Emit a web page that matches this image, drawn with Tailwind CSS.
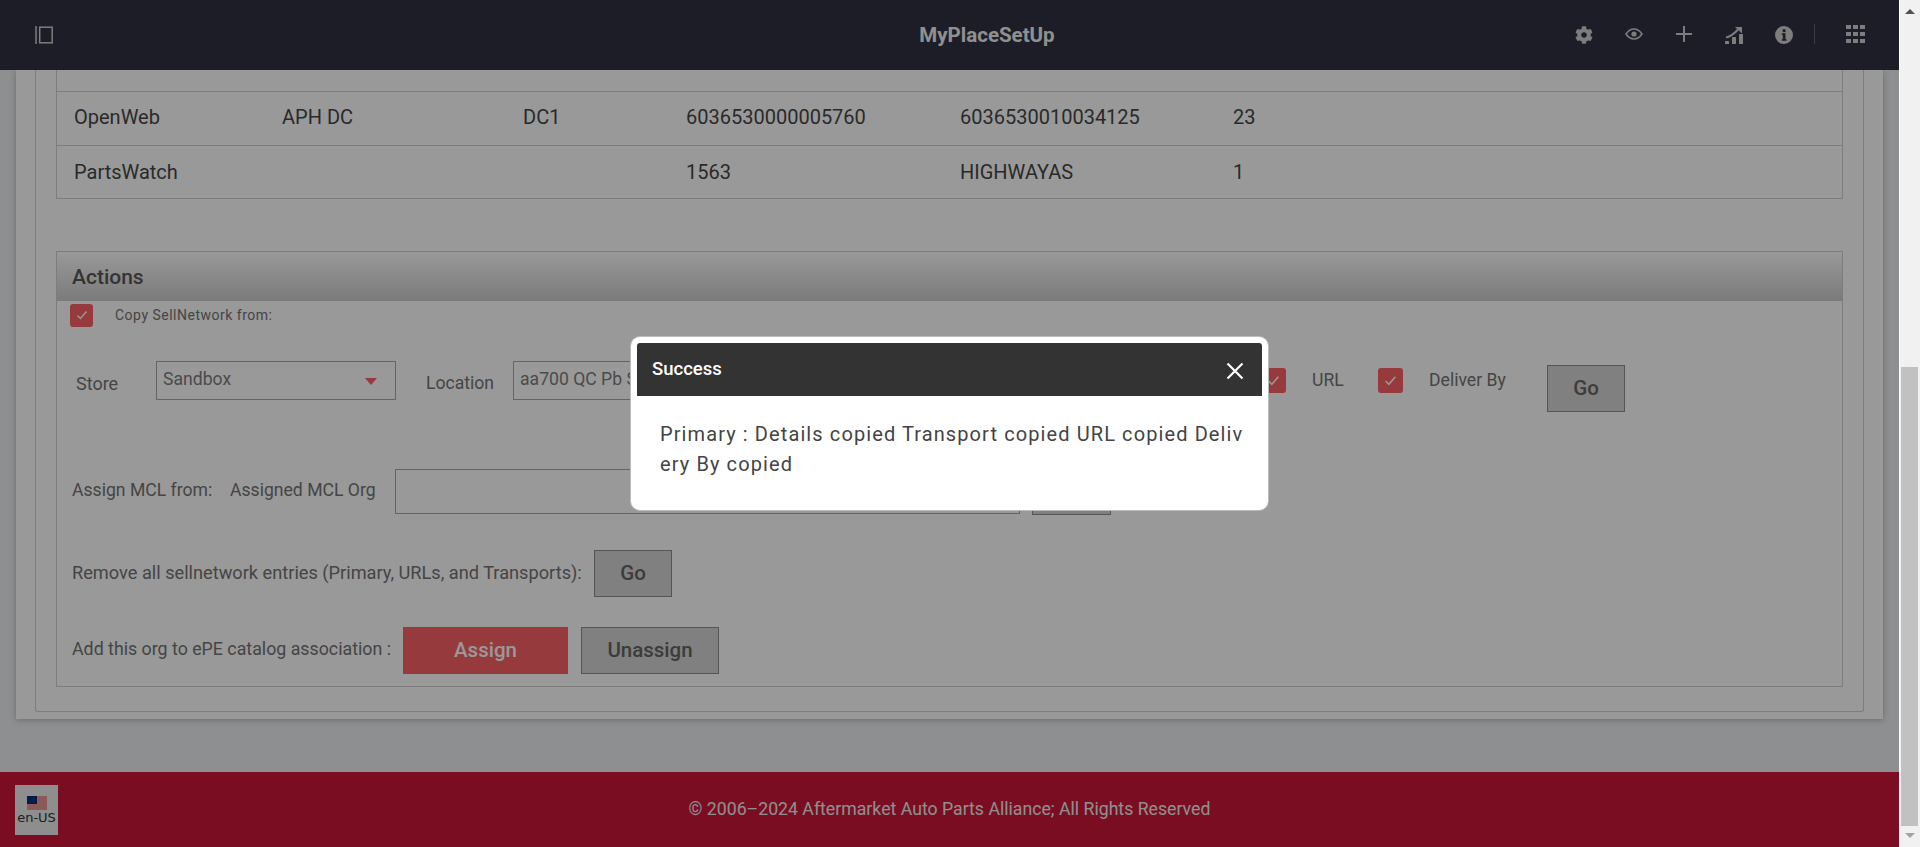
<!DOCTYPE html>
<html lang="en">
<head>
    <meta charset="UTF-8">
    <title>MyPlaceSetUp</title>
    <script src="https://cdn.jsdelivr.net/npm/@tailwindcss/browser@4"></script>
</head>
<body class="h-screen overflow-hidden flex bg-white font-['Roboto',sans-serif]">
    <!-- Page column, everything here sits under the modal backdrop -->
    <div class="relative w-[1899px] h-full flex flex-col">
        <!-- Top bar -->
        <header class="h-[70px] shrink-0 flex items-center bg-[#2f3140] relative z-10">
            <div class="w-[404px] pl-[35px]">
                <svg width="18" height="18" viewBox="0 0 18 18" fill="none" stroke="#d0d0d0" stroke-width="1.5"><path d="M1 0v18"/><rect x="4.7" y="1.2" width="12.5" height="15.6"/></svg>
            </div>
            <div class="flex-1 text-center text-[20.5px] font-bold text-[#f0f0f0]">MyPlaceSetUp</div>
            <div class="w-[329px] flex items-center">
                <div class="w-[50px] flex justify-center ml-[-11px]">
                    <svg width="18" height="18" viewBox="0 0 512 512" fill="#d0d0d0"><path d="M487.4 315.7l-42.6-24.6c4.3-23.2 4.3-47 0-70.2l42.6-24.6c4.9-2.8 7.1-8.6 5.5-14-11.1-35.6-30-67.8-54.7-94.6-3.8-4.1-10-5.1-14.8-2.3L380.8 110c-17.9-15.4-38.5-27.3-60.8-35.1V25.8c0-5.6-3.9-10.5-9.4-11.7-36.7-8.2-74.3-7.8-109.2 0-5.5 1.2-9.4 6.1-9.4 11.7V75c-22.2 7.9-42.8 19.8-60.8 35.1L88.7 85.5c-4.9-2.8-11-1.9-14.8 2.3-24.7 26.7-43.6 58.9-54.7 94.6-1.7 5.4.6 11.2 5.5 14L67.3 221c-4.3 23.2-4.3 47 0 70.2l-42.6 24.6c-4.9 2.8-7.1 8.6-5.5 14 11.1 35.6 30 67.8 54.7 94.6 3.8 4.1 10 5.1 14.8 2.3l42.6-24.6c17.9 15.4 38.5 27.3 60.8 35.1v49.2c0 5.6 3.9 10.5 9.4 11.7 36.7 8.2 74.3 7.8 109.2 0 5.5-1.2 9.4-6.1 9.4-11.7v-49.2c22.2-7.9 42.8-19.8 60.8-35.1l42.6 24.6c4.9 2.8 11 1.9 14.8-2.3 24.7-26.7 43.6-58.9 54.7-94.6 1.5-5.5-.7-11.3-5.6-14.1zM256 336c-44.1 0-80-35.9-80-80s35.9-80 80-80 80 35.9 80 80-35.9 80-80 80z"/></svg>
                </div>
                <div class="w-[50px] flex justify-center mb-[2px]">
                    <svg width="18" height="12" viewBox="0 0 18 12" fill="none" stroke="#d0d0d0" stroke-width="1.6"><path d="M1 6C3.5 2.4 6 1 9 1s5.5 1.4 8 5c-2.5 3.6-5 5-8 5S3.5 9.6 1 6z"/><circle cx="9" cy="6" r="2.6" fill="#d0d0d0" stroke="none"/></svg>
                </div>
                <div class="w-[50px] flex justify-center mb-[2px]">
                    <svg width="18" height="18" viewBox="0 0 18 18" stroke="#d0d0d0" stroke-width="2"><path d="M9 1v16M1 9h16"/></svg>
                </div>
                <div class="w-[50px] flex justify-center">
                    <svg width="18" height="18" viewBox="0 0 18 18" fill="#d0d0d0"><rect x="0" y="15" width="4" height="3" rx="0.5"/><rect x="7" y="11" width="4" height="7" rx="0.5"/><rect x="14" y="8" width="4" height="10" rx="0.5"/><path d="M1 11.5C5 10.5 9 8 13 3.5" fill="none" stroke="#d0d0d0" stroke-width="2"/><path d="M10 1h7v6.5z"/></svg>
                </div>
                <div class="w-[50px] flex justify-center">
                    <svg width="18" height="18" viewBox="0 0 18 18"><circle cx="9" cy="9" r="9" fill="#d0d0d0"/><rect x="7.7" y="3.3" width="2.8" height="2.8" fill="#2f3140"/><path d="M6.8 7.3h3.7v6h1v1.5H6.8v-1.5h1v-4.5h-1z" fill="#2f3140"/></svg>
                </div>
                <div class="w-px h-[20px] ml-[5px] mb-[2px] bg-[#62646e]"></div>
                <div class="ml-[31px] mb-[2px] grid grid-cols-3 gap-[2.5px]">
                    <span class="size-[4.5px] bg-[#d0d0d0]"></span><span class="size-[4.5px] bg-[#d0d0d0]"></span><span class="size-[4.5px] bg-[#d0d0d0]"></span>
                    <span class="size-[4.5px] bg-[#d0d0d0]"></span><span class="size-[4.5px] bg-[#d0d0d0]"></span><span class="size-[4.5px] bg-[#d0d0d0]"></span>
                    <span class="size-[4.5px] bg-[#d0d0d0]"></span><span class="size-[4.5px] bg-[#d0d0d0]"></span><span class="size-[4.5px] bg-[#d0d0d0]"></span>
                </div>
            </div>
        </header>

        <!-- Content -->
        <main class="flex-1 bg-[#eceef0] px-[16px] overflow-hidden">
            <div class="h-[649px] bg-white shadow-[0_1px_6px_rgba(0,0,0,0.25)] px-[19px] pb-[7px]">
                <div class="h-full border-x border-b border-[#d0d0d0] rounded-b-[3px] pl-[20px] pr-[20px] pb-[24px] flex flex-col">
                    <!-- Table -->
                    <div class="border-x border-b border-[#d0d0d0] text-[20px] text-[#474747]">
                        <div class="h-[22px] border-b border-[#d0d0d0]"></div>
                        <div class="h-[54px] border-b border-[#d0d0d0] flex items-center pl-[17px] pb-[3px]">
                            <span class="w-[208px]">OpenWeb</span><span class="w-[241px]">APH DC</span><span class="w-[163px]">DC1</span><span class="w-[274px]">6036530000005760</span><span class="w-[273px]">6036530010034125</span><span>23</span>
                        </div>
                        <div class="h-[52px] flex items-center pl-[17px]">
                            <span class="w-[208px]">PartsWatch</span><span class="w-[241px]"></span><span class="w-[163px]"></span><span class="w-[274px]">1563</span><span class="w-[273px]">HIGHWAYAS</span><span>1</span>
                        </div>
                    </div>

                    <!-- Actions -->
                    <section class="mt-[52px] flex-1 border border-[#d0d0d0] text-[#737373]">
                        <h2 class="h-[49px] pl-[15px] pt-[3px] flex items-center text-[21px] font-medium text-[#585858] bg-gradient-to-b from-white to-[#cdcdcd]">Actions</h2>

                        <div class="flex items-center h-[28px] pl-[13px] text-[14px] tracking-[0.5px]">
                            <span class="size-[23px] rounded-[3px] bg-[#fa6166] flex items-center justify-center">
                                <svg width="12" height="12" viewBox="0 0 12 12" fill="none" stroke="white" stroke-width="1.4"><path d="M1.5 6.5l3 3 6-7"/></svg>
                            </span>
                            <span class="ml-[22px]">Copy SellNetwork from:</span>
                        </div>

                        <div class="flex items-start mt-[32px] h-[51px] pl-[19px] text-[17.6px]">
                            <span class="w-[80px] mt-[9px] text-[18px]">Store</span>
                            <div class="w-[240px] h-[39px] border border-[#a8a8a8] pl-[6px] pt-[4px] flex justify-between text-[#7d7d7d]">
                                <span>Sandbox</span>
                                <span class="mt-[12px] mr-[18px] w-0 h-0 border-x-[6.5px] border-t-[7px] border-x-transparent border-t-[#fa6166]"></span>
                            </div>
                            <span class="ml-[30px] w-[87px] mt-[9px]">Location</span>
                            <div class="w-[300px] h-[39px] border border-[#a8a8a8] pl-[6px] pt-[4px] text-[#7d7d7d]">
                                <div class="w-[111px] overflow-hidden whitespace-nowrap">aa700 QC Pb Store</div>
                            </div>
                            <span class="ml-[448px] mt-[7px] size-[25px] rounded-[3px] bg-[#fa6166] flex items-center justify-center">
                                <svg width="13" height="13" viewBox="0 0 12 12" fill="none" stroke="white" stroke-width="1.4"><path d="M1.5 6.5l3 3 6-7"/></svg>
                            </span>
                            <span class="ml-[26px] w-[66px] mt-[6px]">URL</span>
                            <span class="mt-[7px] size-[25px] rounded-[3px] bg-[#fa6166] flex items-center justify-center">
                                <svg width="13" height="13" viewBox="0 0 12 12" fill="none" stroke="white" stroke-width="1.4"><path d="M1.5 6.5l3 3 6-7"/></svg>
                            </span>
                            <span class="ml-[26px] w-[118px] mt-[6px]">Deliver By</span>
                            <button class="w-[78px] mt-[4px] h-[47px] bg-[#d5d5d5] border border-[#8e8e8e] text-[20.5px] font-medium text-[#646464]">Go</button>
                        </div>

                        <div class="flex items-center mt-[57px] h-[45px] pl-[15px] text-[17.6px]">
                            <span class="w-[158px] mb-[3px]">Assign MCL from:</span>
                            <span class="w-[165px] mb-[3px]">Assigned MCL Org</span>
                            <div class="w-[625px] h-full border border-[#a8a8a8]"></div>
                            <button class="ml-[12px] w-[79px] h-[47px] bg-[#d5d5d5] border border-[#8e8e8e] text-[20.5px] font-medium text-[#646464]">Go</button>
                        </div>

                        <div class="flex items-center mt-[36px] h-[47px] pl-[15px] text-[18.2px]">
                            <span class="w-[522px] mb-[2px]">Remove all sellnetwork entries (Primary, URLs, and Transports):</span>
                            <button class="w-[78px] h-full bg-[#d5d5d5] border border-[#8e8e8e] text-[20.5px] font-medium text-[#646464]">Go</button>
                        </div>

                        <div class="flex items-center mt-[30px] h-[47px] pl-[15px] text-[17.8px]">
                            <span class="w-[331px] mb-[2px]">Add this org to ePE catalog association :</span>
                            <button class="w-[165px] h-full bg-[#fa6166] text-[20.5px] font-medium text-white">Assign</button>
                            <button class="ml-[13px] w-[138px] h-full bg-[#d5d5d5] border border-[#8e8e8e] text-[20.5px] font-medium text-[#646464]">Unassign</button>
                        </div>
                    </section>
                </div>
            </div>
        </main>

        <!-- Footer -->
        <footer class="h-[75px] shrink-0 bg-[#cd163a] relative flex items-center justify-center text-[17.7px] text-[#eeeeee]">
            <div class="absolute left-[15px] top-[13px] w-[43px] h-[50px] bg-[#ededed] flex flex-col items-center pt-[11px] font-['DejaVu_Sans',sans-serif] text-[13px] leading-[14px] text-[#333333]">
                <svg class="shrink-0" width="20" height="14" viewBox="0 0 20 14"><rect width="20" height="14" fill="#f8f8f8"/><path d="M0 1h20M0 3h20M0 5h20M0 7h20M0 9h20M0 11h20M0 13h20" stroke="#d33" stroke-width="1"/><rect width="10" height="8" fill="#00307a"/></svg>
                <span class="mt-[1px]">en-US</span>
            </div>
            <p>© 2006–2024 Aftermarket Auto Parts Alliance; All Rights Reserved</p>
        </footer>

        <!-- Modal backdrop -->
        <div class="absolute inset-0 z-20 bg-black/40"></div>

        <!-- Success dialog -->
        <div class="absolute z-30 left-[630px] top-[336px] w-[639px] h-[175px] bg-white rounded-[10px] border border-[#bbbbbb] p-[6px]">
            <div class="h-[53px] bg-[#333333] rounded-t-[3px] pl-[15px] pr-[18px] flex items-center justify-between text-white text-[18.5px] font-medium">
                <span>Success</span>
                <svg class="mt-[3px]" width="18" height="18" viewBox="0 0 18 18" stroke="white" stroke-width="2.2"><path d="M1.5 1.5l15 15M16.5 1.5l-15 15"/></svg>
            </div>
            <p class="mt-[23px] pl-[23px] pr-[17px] text-[20px] leading-[30px] tracking-[1.1px] text-[#444444] break-all">Primary : Details copied Transport copied URL copied Delivery By copied</p>
        </div>
    </div>

    <!-- Scrollbar -->
    <div class="w-[21px] h-full bg-white pl-[1px]">
        <div class="h-full bg-[#f1f1f1] relative flex flex-col items-center justify-between py-[9px]">
            <span class="w-0 h-0 border-x-[5px] border-b-[5px] border-x-transparent border-b-[#505050]"></span>
            <span class="w-0 h-0 border-x-[5px] border-t-[5px] border-x-transparent border-t-[#a3a3a3]"></span>
            <div class="absolute top-[367px] left-[1px] w-[17px] h-[459px] bg-[#c1c1c1]"></div>
        </div>
    </div>
</body>
</html>
